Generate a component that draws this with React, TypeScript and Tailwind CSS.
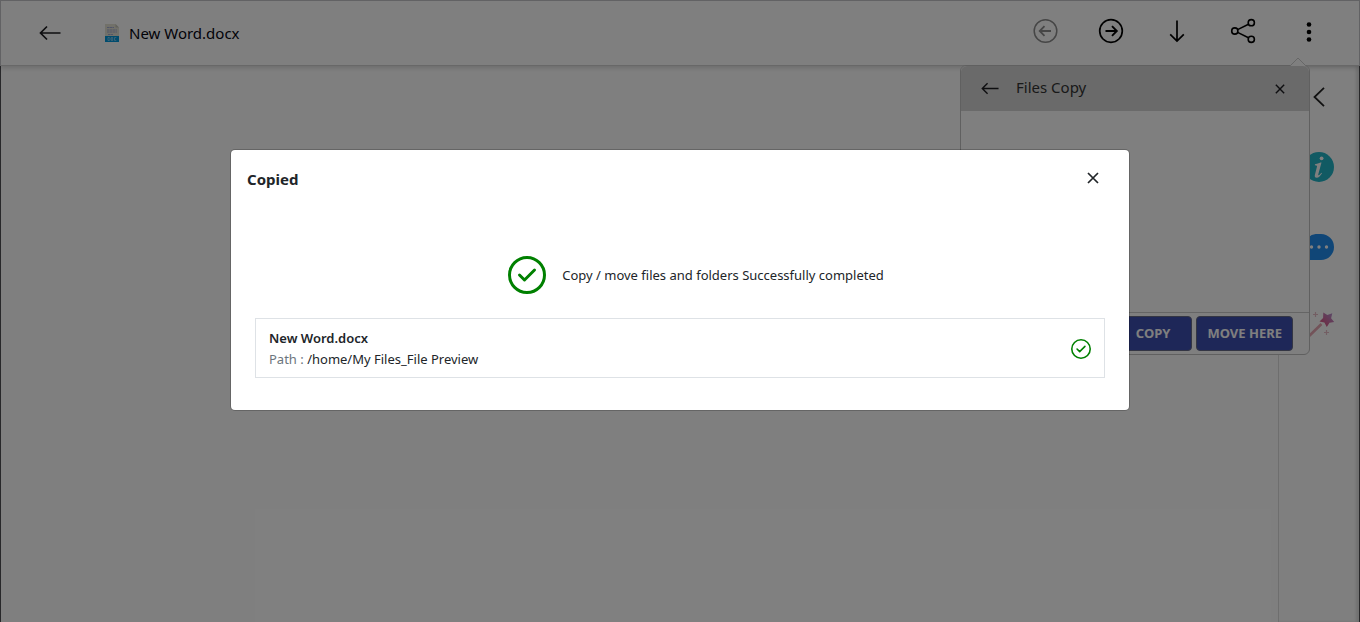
import type { ReactNode } from "react";

function BackArrow({ className }: { className: string }) {
  return (
    <svg viewBox="0 0 22 16" fill="none" stroke="currentColor" className={className} aria-hidden="true">
      <path d="M8 1.500 1.500 8 8 14.500M1.500 8H21.500" strokeWidth="1.700" />
    </svg>
  );
}

function Cross({ className }: { className: string }) {
  return (
    <svg viewBox="0 0 12 12" fill="none" stroke="currentColor" className={className} aria-hidden="true">
      <path d="M1 1l10 10M11 1 1 11" strokeWidth="1.700" />
    </svg>
  );
}

function CheckCircle({ className, ring }: { className: string; ring: number }) {
  return (
    <svg viewBox="0 0 38 38" fill="none" stroke="#008000" strokeWidth={ring} className={className} aria-hidden="true">
      <circle cx="19" cy="19" r={19 - ring / 2} />
      <path d="M11.500 19l5 5L26.500 14" strokeLinecap="round" strokeLinejoin="round" />
    </svg>
  );
}

function DocIcon() {
  return (
    <svg viewBox="0 0 14 18" className="h-[18px] w-3.5" aria-hidden="true">
      <path d="M0 0h10.500L14 3.500V12H0z" fill="#e4e2d5" />
      <path d="M10.500 0 14 3.500H10.500z" fill="#c4c4b8" />
      <path d="M2 3.500h7M2 6h10M2 8h10M3 10.500h5" stroke="#a2aad2" strokeWidth="1.200" strokeDasharray="2.500 .4" />
      <path d="M0 12h14v6H0z" fill="#0098dc" />
      <path d="M3 13.500v3h1.200a1 1 0 0 0 .8-1v-1a1 1 0 0 0-.8-1zM6.300 13.500h1.400v3H6.300zM11.300 13.600H9.500v2.800h1.800" fill="none" stroke="#a8d8f2" strokeWidth=".7" />
    </svg>
  );
}

function ToolButton({ label, disabled, children }: { label: string; disabled?: boolean; children: ReactNode }) {
  return (
    <button
      type="button"
      aria-label={label}
      disabled={disabled}
      className="flex size-[26px] items-center justify-center text-black disabled:text-[#8c8c8c]"
    >
      {children}
    </button>
  );
}

function Toolbar() {
  return (
    <header className="relative flex h-[66px] items-center justify-between border border-[#c4c4c8] border-b-[#d0d0d0] bg-white pr-[37px] pl-[38px] shadow-[0_2px_5px_rgba(0,0,0,0.16)]">
      <div className="flex items-center gap-11">
        <button type="button" aria-label="Back" className="text-[#1c1c20]">
          <BackArrow className="h-4 w-[22px]" />
        </button>
        <div className="flex items-center gap-2.5">
          <DocIcon />
          <span className="text-[15px] leading-5 text-[#040410]">New Word.docx</span>
        </div>
      </div>
      <nav aria-label="File actions" className="flex items-center gap-10 pb-1">
        <ToolButton label="Previous file" disabled>
          <svg viewBox="0 0 26 26" fill="none" stroke="currentColor" strokeWidth="1.500" className="size-[26px]">
            <circle cx="13.500" cy="13" r="11.300" />
            <path d="M19 13H8M12.500 8.200 7.700 13l4.800 4.800" strokeWidth="1.800" />
          </svg>
        </ToolButton>
        <ToolButton label="Next file">
          <svg viewBox="0 0 26 26" fill="none" stroke="currentColor" strokeWidth="1.700" className="size-[26px]">
            <circle cx="13" cy="13" r="11.300" />
            <path d="M7.500 13h11M14 8.200l4.800 4.800-4.800 4.800" strokeWidth="1.900" />
          </svg>
        </ToolButton>
        <ToolButton label="Download">
          <svg viewBox="0 0 26 26" fill="none" stroke="currentColor" strokeWidth="1.700" className="size-[26px]">
            <path d="M13 2.500v20.500M6.200 16.300 13 23l6.800-6.700" />
          </svg>
        </ToolButton>
        <ToolButton label="Share">
          <svg viewBox="0 0 26 26" fill="none" stroke="currentColor" strokeWidth="1.600" className="size-[26px]">
            <circle cx="4.800" cy="13" r="3.100" />
            <circle cx="21.300" cy="4.700" r="3.100" />
            <circle cx="21.300" cy="21.300" r="3.100" />
            <path d="M7.600 11.600 18.500 6.200M7.600 14.400l10.900 5.400" />
          </svg>
        </ToolButton>
        <ToolButton label="More options">
          <svg viewBox="0 0 26 26" fill="currentColor" className="size-[26px]">
            <circle cx="13" cy="6.500" r="2.300" />
            <circle cx="13" cy="14" r="2.300" />
            <circle cx="13" cy="21.500" r="2.300" />
          </svg>
        </ToolButton>
      </nav>
    </header>
  );
}

function SideRail() {
  return (
    <aside className="flex w-[82px] flex-col items-center border-r border-l border-r-[#505054] border-l-[#dcdcdc] pt-[18px] shadow-[inset_-3px_0_3px_rgba(0,0,0,0.12)]">
      <button type="button" aria-label="Expand panel" className="flex h-[26px] w-8 items-center justify-center">
        <svg viewBox="0 0 12 20" fill="none" stroke="#222" strokeWidth="1.800" className="h-5 w-3">
          <path d="M11 .8 1.500 10 11 19.200" />
        </svg>
      </button>
      <button type="button" aria-label="Information" className="mt-[42px]">
        <svg viewBox="0 0 30 30" className="size-[30px]">
          <circle cx="15" cy="15" r="15" fill="#22b4c6" />
          <circle cx="17.600" cy="6.300" r="1.900" fill="#fff" />
          <path d="M11 12.200c2-.3 3.700-.8 5.600-1.600h.9l-3.200 11.600c-.3 1.200.3 1.300 1 .7.800-.6 1.400-1.300 2-2.100l.7.500c-1.600 2.600-3.300 4.500-5.300 4.500-1.700 0-2.300-1.100-1.800-3l2-7.700c.3-1.300.1-1.700-2.100-1.800z" fill="#fff" />
        </svg>
      </button>
      <button type="button" aria-label="Comments" className="mt-[52px]">
        <svg viewBox="0 0 30 26" className="h-[26px] w-[30px]">
          <path d="M14 0h3a13 13 0 0 1 0 26H0V13A13 13 0 0 1 14 0z" fill="#208cee" />
          <path d="M7.500 13h.01M15 13h.01M22.500 13h.01" stroke="#fff" strokeWidth="3.400" strokeLinecap="round" />
        </svg>
      </button>
      <button type="button" aria-label="Smart tools" className="mt-[50px]">
        <svg viewBox="0 0 32 32" className="size-8">
          <defs>
            <linearGradient id="wand" x1="0" y1="1" x2="1" y2="0">
              <stop offset="0.1" stopColor="#e0507c" />
              <stop offset="0.9" stopColor="#b890d0" />
            </linearGradient>
          </defs>
          <path d="M3 29 18.500 14" stroke="#e6a6b2" strokeWidth="2.600" />
          <path d="m20.300 2.400 4 2.700 5-1.800-1.200 5 3.100 3.700-4.700.7-2.700 4.300-2.400-4.500-4.900-1 3.600-3.600z" fill="url(#wand)" />
          <path d="M12.500 2v5M10 4.500h5M23.500 20v5M21 22.500h5" stroke="#e6bcc6" strokeWidth="1.200" />
        </svg>
      </button>
    </aside>
  );
}

function CopyPanel() {
  return (
    <section
      aria-label="Files Copy"
      className="absolute top-[65px] right-[50px] flex h-[290px] w-[350px] flex-col rounded-md border border-[#c0c0c0] bg-white"
    >
      <svg viewBox="0 0 16 9" className="absolute -top-[9px] right-[3px] h-[9px] w-4" aria-hidden="true">
        <path d="M0 9 8 1l8 8z" fill="#fff" />
        <path d="M0 9 8 1l8 8" fill="none" stroke="#cfcfcf" />
      </svg>
      <div className="flex h-[45px] items-center rounded-t-md bg-[#d4d4d4] pr-6 pl-5">
        <button type="button" aria-label="Back to menu" className="text-[#1c1c20]">
          <BackArrow className="h-[13px] w-[18px]" />
        </button>
        <h2 className="ml-[17px] flex-1 pb-0.5 text-[15px] text-[#333]">Files Copy</h2>
        <button type="button" aria-label="Close panel" className="text-[#1c1c20]">
          <Cross className="size-2.5" />
        </button>
      </div>
      <div className="flex-1" />
      <footer className="flex justify-end gap-1 border-t border-[#cacaca] p-[3px] pr-4">
        <button type="button" className="h-[35px] rounded-[4px] border border-[#686c88] bg-[#3c4fb0] px-[21px] text-[13px] font-bold text-white">
          COPY
        </button>
        <button type="button" className="h-[35px] rounded-[4px] border border-[#686c88] bg-[#3c4fb0] px-2.5 text-[13px] font-bold text-white">
          MOVE HERE
        </button>
      </footer>
    </section>
  );
}

function CopiedDialog() {
  return (
    <div className="absolute inset-0 flex items-start justify-center bg-black/50 px-4 pt-[150px]">
      <div
        role="dialog"
        aria-modal="true"
        aria-labelledby="copied-title"
        className="w-full max-w-[898px] rounded-[4px] bg-white pb-8 text-[#212529] shadow-[0_0_0_1px_rgba(0,0,0,0.2)]"
      >
        <div className="flex h-14 items-center justify-between pr-[30px] pl-4">
          <h1 id="copied-title" className="pt-0.5 text-[15px] font-bold">Copied</h1>
          <button type="button" aria-label="Close">
            <Cross className="size-3" />
          </button>
        </div>
        <div className="mt-[50px] flex items-center justify-center gap-4 pl-8">
          <CheckCircle className="size-[38px]" ring={3} />
          <p className="pt-0.5 text-[13px]">Copy / move files and folders Successfully completed</p>
        </div>
        <div className="mx-6 mt-6 flex h-[60px] items-center justify-between border border-[#dee2e6] px-[13px] pt-0.5">
          <div className="text-[13px] leading-[21px]">
            <p className="font-semibold">New Word.docx</p>
            <p>
              <span className="text-[#6c757d]">Path : </span>/home/My Files_File Preview
            </p>
          </div>
          <CheckCircle className="size-5" ring={3} />
        </div>
      </div>
    </div>
  );
}

export default function App() {
  return (
    <div className="relative flex min-h-screen flex-col overflow-hidden bg-white font-['Noto_Sans','Open_Sans',sans-serif]">
      <Toolbar />
      <main className="flex flex-1">
        <div className="flex-1 border-l border-[#505054]" />
        <SideRail />
      </main>
      <CopyPanel />
      <CopiedDialog />
    </div>
  );
}
